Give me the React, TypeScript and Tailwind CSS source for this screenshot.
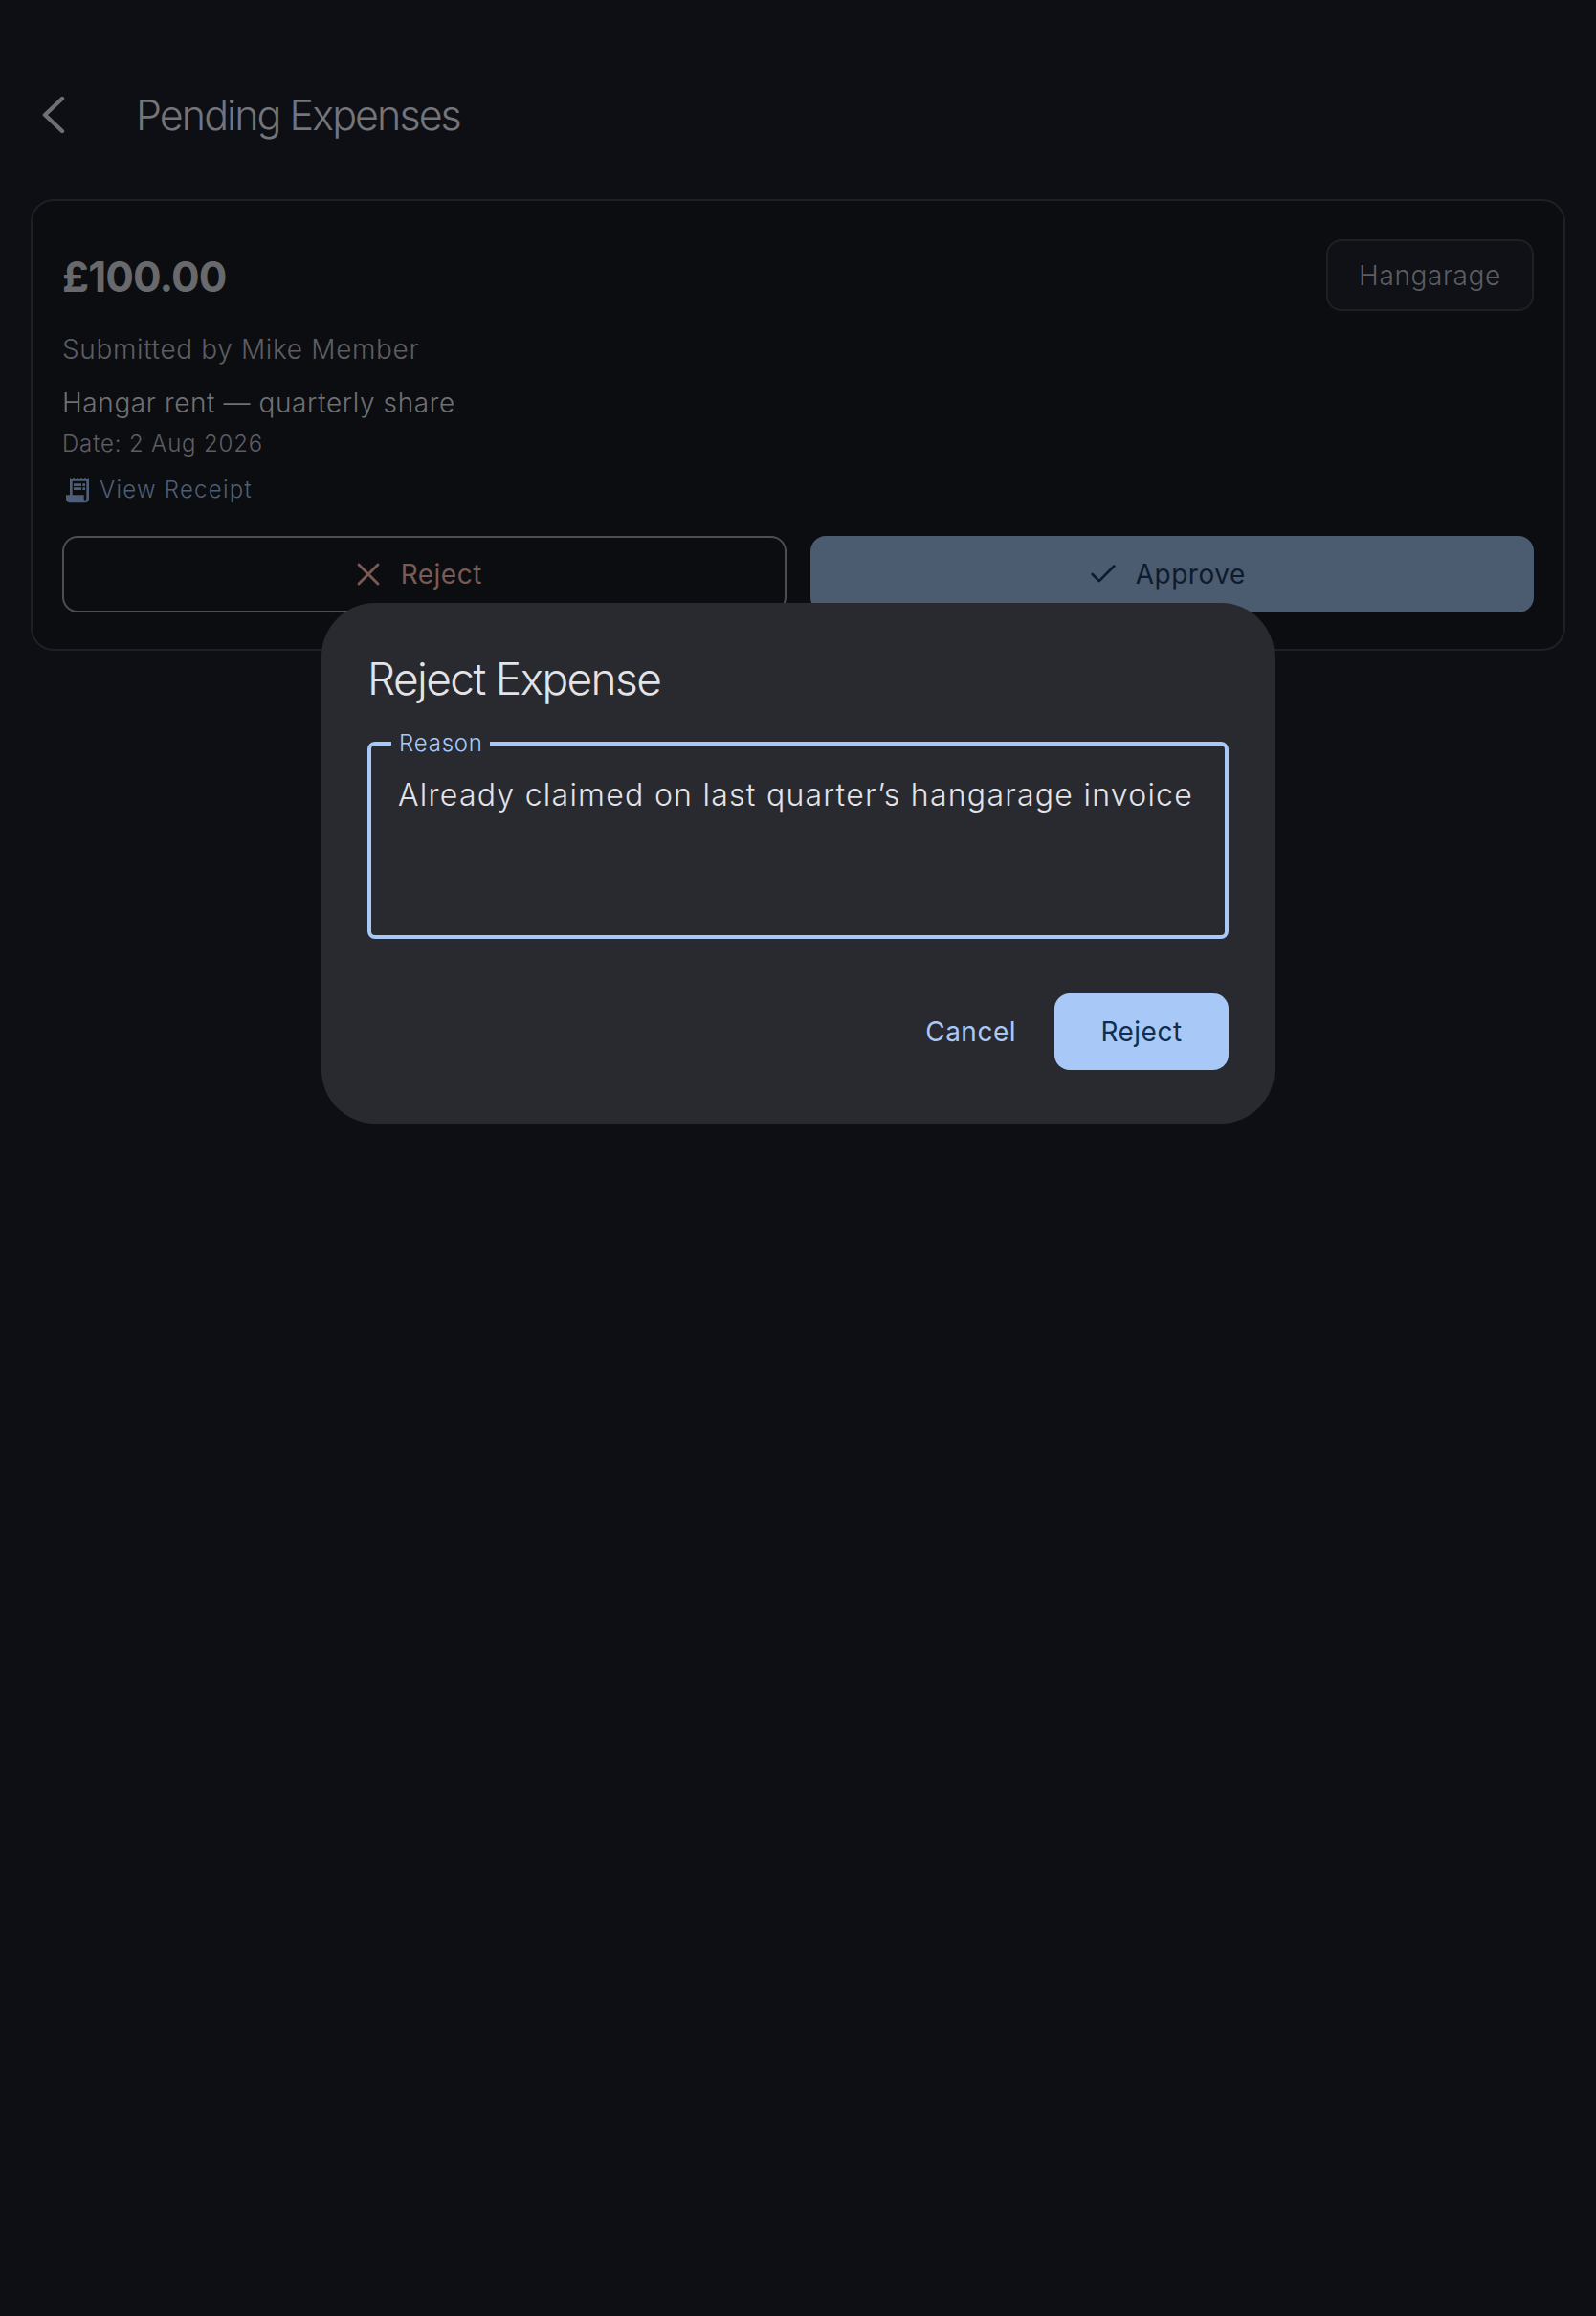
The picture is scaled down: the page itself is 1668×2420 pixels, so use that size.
import { Check, X } from "lucide-react";

const ReceiptIcon = () => (
  <svg viewBox="0 0 24 24" fill="currentColor" className="w-[32px] h-[32px]">
    <path d="M19.5 3.5 18 2l-1.5 1.5L15 2l-1.5 1.5L12 2l-1.5 1.5L9 2 7.5 3.5 6 2v14H3v3c0 1.66 1.34 3 3 3h12c1.66 0 3-1.34 3-3V2l-1.5 1.5zM19 19c0 .55-.45 1-1 1s-1-.45-1-1v-3H8V5h11v14z" />
    <path d="M9 7h6v2H9zm7 0h2v2h-2zm-7 3h6v2H9zm7 0h2v2h-2z" />
  </svg>
);

const BackIcon = () => (
  <svg viewBox="0 0 26 40" fill="none" stroke="currentColor" strokeWidth="4.4" strokeLinecap="round" strokeLinejoin="round" className="w-[26px] h-[40px]">
    <path d="M23 3 5 20l18 17" />
  </svg>
);

const ExpenseCard = () => (
  <div className="mx-[32px] mt-[60px] h-[472px] rounded-[24px] border-2 border-[#1f2024] bg-[#0c0d10] pl-[31px] pr-[31px] pt-[40px]">
    <div className="flex items-start justify-between">
      <div className="pt-[13px] text-[44px] leading-[52px] font-bold text-[#68696d] tracking-[-0.9px]">£100.00</div>
      <div className="flex h-[75px] w-[217px] items-center justify-center rounded-[16px] border-2 border-[#1f2024] bg-[#0f1116] text-[28px] font-light tracking-[0.6px] text-[#5c5d62]">
        Hangarage
      </div>
    </div>
    <div className="mt-[20px] text-[28px] leading-[40px] font-light tracking-[0.65px] text-[#5c5d62]">Submitted by Mike Member</div>
    <div className="mt-[16px] text-[28px] leading-[40px] font-light tracking-[0.6px] text-[#6f7074]">Hangar rent — quarterly share</div>
    <div className="mt-[7px] text-[24px] leading-[32px] font-light tracking-[0.85px] text-[#5c5d62]">Date: 2 Aug 2026</div>
    <div className="mt-[14px] flex h-[36px] items-center gap-[7px] text-[#4d5f78]">
      <ReceiptIcon />
      <span className="text-[24px] leading-[32px] font-light tracking-[1.25px]">View Receipt</span>
    </div>
    <div className="mt-[30px] grid grid-cols-2 gap-[25px]">
      <button className="flex h-[80px] items-center justify-center gap-[14px] rounded-[16px] border-2 border-[#4d4e52] pr-[18px] text-[28px] tracking-[0.5px] text-[#7a5a54]">
        <X size={40} strokeWidth={1.7} />
        Reject
      </button>
      <button className="flex h-[80px] items-center justify-center gap-[17px] rounded-[16px] bg-[#4b5b70] pr-[12px] text-[28px] tracking-[0.5px] text-[#0d1b2c]">
        <Check size={34} strokeWidth={1.9} />
        Approve
      </button>
    </div>
  </div>
);

const RejectDialog = () => (
  <div className="absolute inset-x-0 top-[630px] flex justify-center">
    <div className="h-[544px] w-[996px] rounded-[56px] bg-[#292a2f] px-[48px] pt-[47px]">
      <h2 className="text-[46px] leading-[64px] font-light tracking-[-1.6px] text-[#e3e3e8]">Reject Expense</h2>
      <div className="relative mt-[34px] h-[206px] rounded-[8px] border-4 border-[#a8c9f8] px-[28px] pt-[28px]">
        <span className="absolute -top-[17px] left-[21px] bg-[#292a2f] pl-[8px] pr-[7px] text-[24px] leading-[30px] font-light tracking-[0.8px] text-[#a8c9f8]">
          Reason
        </span>
        <p className="whitespace-nowrap text-[32px] leading-[48px] font-light tracking-[1.26px] text-[#e3e3e8]">
          Already claimed on last quarter’s hangarage invoice
        </p>
      </div>
      <div className="mt-[57px] flex items-center justify-end gap-[40px]">
        <button className="text-[28px] tracking-[0.5px] text-[#a8c9f8]">Cancel</button>
        <button className="h-[80px] w-[182px] rounded-[16px] bg-[#a8c9f8] text-[28px] tracking-[0.5px] text-[#0f2f50]">Reject</button>
      </div>
    </div>
  </div>
);

export default function App() {
  return (
    <div className="relative min-h-[2420px] overflow-hidden bg-[#0d0f14] font-['Inter',sans-serif]">
      <header className="flex h-[56px] translate-y-[92px] items-center pl-[42px]">
        <span className="text-[#6e6f73]">
          <BackIcon />
        </span>
        <h1 className="ml-[74px] text-[43px] leading-[56px] font-light tracking-[-1.95px] text-[#74757a]">Pending Expenses</h1>
      </header>
      <div className="pt-[92px]">
        <ExpenseCard />
      </div>
      <RejectDialog />
    </div>
  );
}
